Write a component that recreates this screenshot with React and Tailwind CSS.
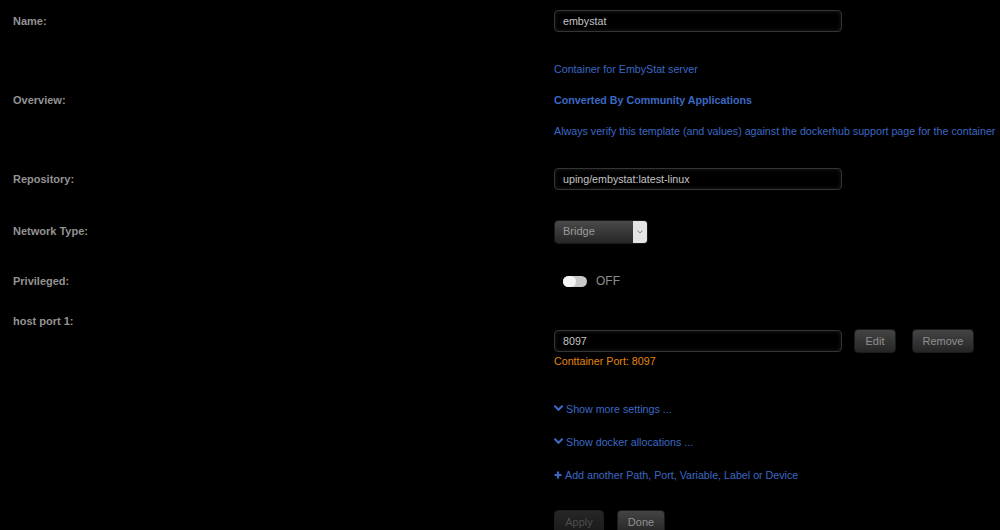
import React from 'react';

const Label = ({ children, className = '' }) => (
  <div className={`w-[541px] shrink-0 text-[11px] font-bold text-[#939393] ${className}`}>{children}</div>
);

const TextInput = ({ value }) => (
  <div className="w-[288px] h-[22px] flex items-center px-2 rounded-[4px] border border-[#343434] bg-black shadow-[inset_0_0_4px_rgba(255,255,255,0.12)] text-[10.7px] text-[#c4c4c4]">
    {value}
  </div>
);

const Btn = ({ children, className = '', disabled }) => (
  <button
    className={`h-[24px] rounded-[4px] border text-[11px] ${
      disabled
        ? 'border-[#1e1e1e] bg-gradient-to-b from-[#262626] to-[#1a1a1a] text-[#4d4d4d]'
        : 'border-[#1b1b1b] bg-gradient-to-b from-[#444444] to-[#262626] text-[#8f8f8f]'
    } ${className}`}
  >
    {children}
  </button>
);

const Chevron = () => (
  <svg width="9" height="7" viewBox="0 0 10 8" className="inline-block mr-[3px] -mt-[1px]">
    <path d="M1 1.5 L5 5.5 L9 1.5" fill="none" stroke="#3c68c4" strokeWidth="2.4" strokeLinecap="round" />
  </svg>
);

export default function App() {
  return (
    <div className="w-[1000px] h-[530px] overflow-hidden bg-black pl-[13px] font-['Liberation_Sans',Arial,sans-serif]">
      {/* Name */}
      <div className="flex items-center h-[42px]">
        <Label>Name:</Label>
        <TextInput value="embystat" />
      </div>

      {/* Overview */}
      <div className="flex items-center h-[116px]">
        <Label>Overview:</Label>
        <div className="flex flex-col gap-[17px] text-[10.7px] leading-[14px] text-[#3c68c4] whitespace-nowrap">
          <div>Container for EmbyStat server</div>
          <div className="font-bold">Converted By Community Applications</div>
          <div>Always verify this template (and values) against the dockerhub support page for the container</div>
        </div>
      </div>

      {/* Repository */}
      <div className="flex items-center h-[42px]">
        <Label>Repository:</Label>
        <TextInput value="uping/embystat:latest-linux" />
      </div>

      {/* Network Type */}
      <div className="flex items-center h-[63px]">
        <Label>Network Type:</Label>
        <div className="flex h-[24px] w-[94px] rounded-[4px] overflow-hidden border border-[#1a1a1a]">
          <div className="flex-1 flex items-center pl-[8px] bg-gradient-to-b from-[#4a4a4a] to-[#262626] text-[11px] text-[#9a9a9a]">
            Bridge
          </div>
          <div className="w-[14px] flex items-center justify-center bg-[#e4e4e4]">
            <svg width="6" height="4" viewBox="0 0 6 4">
              <path d="M0.5 0.5 L3 3 L5.5 0.5" fill="none" stroke="#777" strokeWidth="0.9" />
            </svg>
          </div>
        </div>
      </div>

      {/* Privileged */}
      <div className="flex items-center h-[36px]">
        <Label>Privileged:</Label>
        <div className="flex items-center ml-[9px]">
          <div className="relative w-[24px] h-[11px] rounded-full bg-[#c9c9c9]">
            <div className="absolute left-0 top-0 w-[13px] h-[11px] rounded-full bg-[#f4f4f4]" />
          </div>
          <span className="ml-[9px] text-[12px] text-[#8c8c8c]">OFF</span>
        </div>
      </div>

      {/* host port 1 */}
      <div className="flex">
        <Label className="mt-[15px] leading-[14px]">host port 1:</Label>
        <div className="flex flex-col mt-[30px]">
          <div className="flex items-center">
            <TextInput value="8097" />
            <Btn className="ml-[12px] w-[42px]">Edit</Btn>
            <Btn className="ml-[16px] w-[62px]">Remove</Btn>
          </div>
          <div className="text-[10.7px] leading-[14px] mt-[1px] text-[#e3860f]">Conttainer Port: 8097</div>

          <div className="mt-[34px] flex flex-col gap-[19px] text-[10.7px] leading-[14px] text-[#3c68c4] whitespace-nowrap">
            <div className="flex items-center"><Chevron />Show more settings ...</div>
            <div className="flex items-center"><Chevron />Show docker allocations ...</div>
            <div className="flex items-center">
              <svg width="8" height="8" viewBox="0 0 8 8" className="mr-[3px]">
                <path d="M4 0.5 V7.5 M0.5 4 H7.5" stroke="#3c68c4" strokeWidth="2.2" />
              </svg>
              Add another Path, Port, Variable, Label or Device
            </div>
          </div>

          <div className="flex mt-[28px]">
            <Btn disabled className="w-[50px]">Apply</Btn>
            <Btn className="ml-[13px] w-[48px]">Done</Btn>
          </div>
        </div>
      </div>
    </div>
  );
}
